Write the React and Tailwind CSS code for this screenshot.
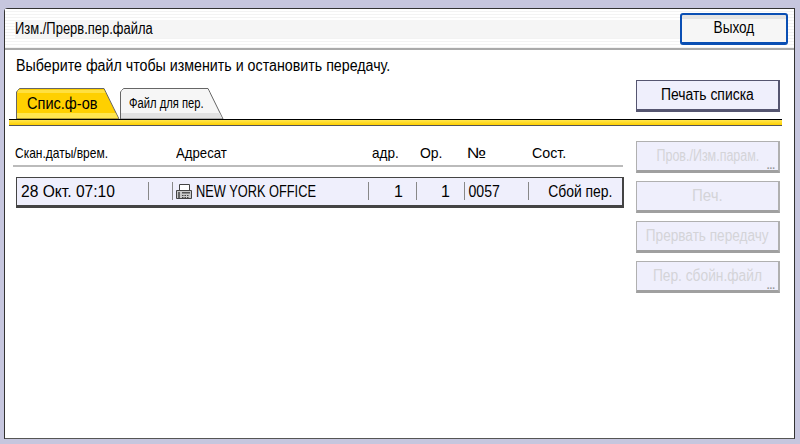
const font = "font-['Liberation_Sans',sans-serif]";

function FaxIcon() {
  return (
    <svg width="18" height="16" viewBox="0 0 18 16" className="mb-[2px] ml-[2px] shrink-0">
      <path d="M4.5 7.5V1.5H14.5V7.5" fill="#fff" stroke="#444" />
      <path d="M1.5 7.5H16.5V15.5H1.5Z" fill="#c8c8c8" stroke="#444" />
      <rect x="3" y="9" width="2" height="6" fill="#666" />
      <path d="M7 9H15V10.5H7Z" fill="#555" />
      <path d="M7 12H8.5V13H7ZM9.5 12H11V13H9.5ZM12 12H13.5V13H12ZM7 14H8.5V15H7ZM9.5 14H11V15H9.5ZM12 14H13.5V15H12Z" fill="#444" />
    </svg>
  );
}

function TabShape({ fill, top, stripe }) {
  return (
    <svg className="absolute inset-0" width="104" height="31" viewBox="0 0 104 31">
      <path d="M0.5 31V4L3.5 0.5H88L103 31Z" fill={fill} stroke="#666" />
      <path d="M2 2H88L89.5 5H1.5Z" fill={top} />
      <path d="M1 25H99.5L102 30H1Z" fill={stripe} />
    </svg>
  );
}

function SideButton({ label, more, scale }) {
  return (
    <div className="relative flex h-[32px] w-[144px] items-center justify-center overflow-hidden whitespace-nowrap border border-[#b0b0b0] border-b-[3px] border-b-[#a0a0a0] border-r-[2px] bg-[#efeffc] text-[16px] text-[#d4d4d8]">
      <span className={scale}>{label}</span>
      {more && <span className="absolute bottom-[-1px] right-[3px] text-[10px] font-bold leading-none text-[#999]">...</span>}
    </div>
  );
}

function Sep() {
  return <span className="mb-[2px] h-[18px] w-px shrink-0 bg-[#888]" />;
}

export default function App() {
  return (
    <div className={`h-[444px] w-[800px] overflow-hidden bg-[#c6c6de] pb-[5px] pl-[4px] pr-[5px] pt-[8px] text-black ${font}`}>
      <div className="flex h-full flex-col rounded-tl-[4px] border border-[#333] border-b-[#555] bg-white">
        {/* Title bar */}
        <div className="flex h-[41px] shrink-0 items-center justify-between border-b-2 border-[#aaa] bg-[repeating-linear-gradient(180deg,#ffffff_0px,#ffffff_2px,#f3f3f3_2px,#f3f3f3_3px)] pl-[10px] pr-[6px]">
          <div className="flex h-[18px] flex-1 items-center bg-[#f5f5f5]">
            <span className="inline-block origin-left scale-x-[.81] whitespace-nowrap text-[16px]">Изм./Прерв.пер.файла</span>
          </div>
          <div className="flex h-[32px] w-[108px] items-center justify-center rounded-[3px] border-2 border-[#0a4fb4] border-b-[3px] bg-[linear-gradient(180deg,#e4e4e4_0px,#e4e4e4_4px,#f6f6f6_4px)] text-[16px]">
            <span className="scale-x-[.85]">Выход</span>
          </div>
        </div>

        <div className="flex flex-1 flex-col pl-[4px] pr-[12px]">
          {/* Message + print button */}
          <div className="flex items-start justify-between pr-[2px] pt-[6px]">
            <p className="origin-left scale-x-[.89] whitespace-nowrap pl-[8px] text-[16px] leading-[20px]">Выберите файл чтобы изменить и остановить передачу.</p>
            <div className="mt-[24px] flex h-[32px] w-[144px] items-center justify-center border border-[#555570] border-b-[3px] border-r-[2px] bg-[#efeffc] text-[16px]">
              <span className="scale-x-[.87] whitespace-nowrap">Печать списка</span>
            </div>
          </div>

          {/* Tabs */}
          <div className="relative z-10 -mt-[24px] flex items-end pl-[7px]">
            <div className="relative flex h-[31px] w-[104px] items-center pl-[11px] text-[16px]">
              <TabShape fill="#ffd000" top="#ffe040" stripe="#ffe650" />
              <span className="relative origin-left scale-x-[.91]">Спис.ф-ов</span>
            </div>
            <div className="relative flex h-[31px] w-[104px] items-center pl-[9px] text-[14px]">
              <TabShape fill="#f6f6f6" top="#f6f6f6" stripe="#e2e2e2" />
              <span className="relative origin-left scale-x-[.8] whitespace-nowrap">Файл для пер.</span>
            </div>
          </div>
          <div className="h-[7px] shrink-0 border-y border-y-black border-b-[#555] bg-[linear-gradient(180deg,#ffe650,#ffd000)]" />

          {/* Body */}
          <div className="flex flex-1 justify-between pr-[2px] pt-[15px]">
            <div className="ml-[4px] w-[610px]">
              <div className="flex h-[26px] items-center border-b-2 border-[#bbb] pl-[2px] text-[15px]">
                <span className="w-[161px] origin-left scale-x-[.8] whitespace-nowrap">Скан.даты/врем.</span>
                <span className="w-[196px] origin-left scale-x-[.88]">Адресат</span>
                <span className="w-[48px] origin-left scale-x-[.9]">адр.</span>
                <span className="w-[47px] origin-left scale-x-[.93]">Ор.</span>
                <span className="w-[65px] origin-left scale-x-[1.2]">№</span>
                <span className="origin-left scale-x-[.95]">Сост.</span>
              </div>
              <div className="ml-[3px] mt-[10px] flex h-[31px] w-[608px] items-center border border-[#444] border-b-[3px] border-r-[2px] bg-[#efeffc] pl-[3px] text-[16px]">
                <span className="w-[128px] origin-left scale-x-[.975] whitespace-nowrap pl-px">28 Окт. 07:10</span>
                <Sep />
                <span className="w-[23px]" />
                <Sep />
                <FaxIcon />
                <span className="ml-[3px] w-[172px] origin-left scale-x-[.8] whitespace-nowrap">NEW YORK OFFICE</span>
                <Sep />
                <span className="w-[47px] pr-[13px] text-right">1</span>
                <Sep />
                <span className="w-[47px] pr-[14px] text-right">1</span>
                <Sep />
                <span className="w-[63px] origin-left scale-x-[.88] pl-[4px]">0057</span>
                <Sep />
                <span className="flex-1 origin-right scale-x-[.87] whitespace-nowrap pr-[11px] text-right">Сбой пер.</span>
              </div>
            </div>
            <div className="flex flex-col gap-[8px]">
              <SideButton label="Пров./Изм.парам." more scale="scale-x-[.78]" />
              <SideButton label="Печ." scale="scale-x-[.94]" />
              <SideButton label="Прервать передачу" scale="scale-x-[.85]" />
              <SideButton label="Пер. сбойн.файл" more scale="scale-x-[.86]" />
            </div>
          </div>
        </div>
      </div>
    </div>
  );
}
